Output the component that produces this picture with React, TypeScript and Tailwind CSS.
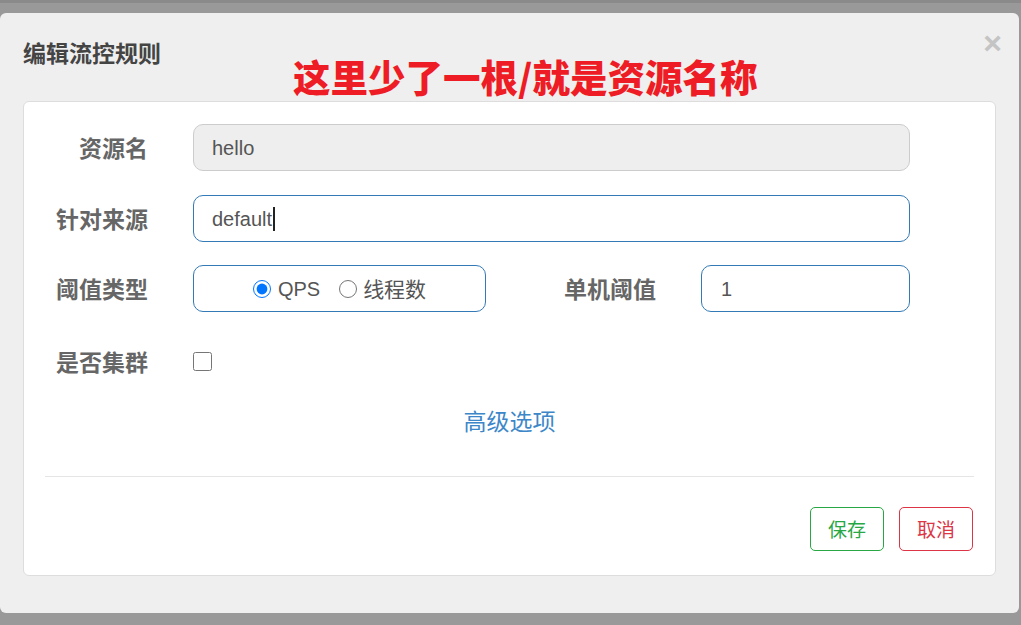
import React from 'react';

const cjk = { fontFamily: '"Noto Sans CJK SC", "Microsoft YaHei", sans-serif' };
const latin = { fontFamily: '"Liberation Sans", Arial, "Noto Sans CJK SC", sans-serif' };

const Label: React.FC<{ text: string; width: string }> = ({ text, width }) => (
  <div className={`${width} shrink-0 text-right text-[23px] font-bold text-[#666] leading-none`} style={cjk}>
    {text}
  </div>
);

export default function App() {
  return (
    <div className="h-[625px] w-full overflow-hidden bg-[#999] border-t-[3px] border-[#8a8a8a] pt-[10px] pr-[2px]">
      <div className="relative h-[600px] w-[1019px] rounded-md bg-[#efefef]">
        <button className="absolute right-[17px] top-[14px] text-[32px] font-bold leading-none text-[#c4c4c4]" style={latin}>
          ×
        </button>

        {/* annotation overlay */}
        <div
          className="absolute left-[293px] top-[44px] text-[37.5px] font-black leading-none text-[#ee1c25] whitespace-nowrap"
          style={cjk}
        >
          这里少了一根/就是资源名称
        </div>

        <div className="pl-[23px] pt-[24px]">
          <h4 className="h-[30px] text-[23px] font-bold leading-[30px] text-[#444]" style={cjk}>
            编辑流控规则
          </h4>
        </div>

        <div className="mx-[23px] mt-[34px] h-[475px] rounded-md border border-[#ddd] bg-white pt-[22px]">
          {/* resource name */}
          <div className="flex h-[47px] items-center">
            <Label text="资源名" width="w-[124px]" />
            <div
              className="ml-[45px] flex h-[47px] w-[717px] items-center rounded-[10px] border border-[#ccc] bg-[#eee] px-[18px] text-[20px] text-[#555]"
              style={latin}
            >
              hello
            </div>
          </div>

          {/* limit app */}
          <div className="mt-[24px] flex h-[47px] items-center">
            <Label text="针对来源" width="w-[124px]" />
            <div
              className="ml-[45px] flex h-[47px] w-[717px] items-center rounded-[10px] border border-[#337ab7] bg-white px-[18px] text-[20px] text-[#555]"
              style={latin}
            >
              default
              <span className="ml-[1px] inline-block h-[24px] w-[2px] bg-[#222]" />
            </div>
          </div>

          {/* threshold type */}
          <div className="mt-[23px] flex h-[47px] items-center">
            <Label text="阈值类型" width="w-[124px]" />
            <div className="ml-[45px] flex h-[47px] w-[293px] items-center justify-center rounded-[10px] border border-[#337ab7] bg-white text-[20px] text-[#555]">
              <label className="flex items-center">
                <input type="radio" name="grade" defaultChecked className="m-0 h-[18px] w-[18px]" />
                <span className="ml-[7px]" style={latin}>QPS</span>
              </label>
              <label className="ml-[19px] flex items-center">
                <input type="radio" name="grade" className="m-0 h-[18px] w-[18px]" />
                <span className="ml-[6px] text-[21px]" style={cjk}>线程数</span>
              </label>
            </div>
            <Label text="单机阈值" width="w-[170px]" />
            <div
              className="ml-[45px] flex h-[47px] w-[209px] items-center rounded-[10px] border border-[#337ab7] bg-white px-[19px] text-[20px] text-[#555]"
              style={latin}
            >
              1
            </div>
          </div>

          {/* cluster */}
          <div className="mt-[26px] flex h-[47px] items-center">
            <Label text="是否集群" width="w-[124px]" />
            <input type="checkbox" className="m-0 ml-[45px] h-[19px] w-[19px]" />
          </div>

          <div className="mt-[19px] h-[32px] text-center text-[23px] leading-[32px] text-[#3d87c9]" style={cjk}>
            高级选项
          </div>

          <div className="mx-[21px] mt-[40px] h-px bg-[#e5e5e5]" />

          <div className="mr-[22px] mt-[30px] flex justify-end gap-[15px]">
            <button
              className="h-[44px] w-[74px] rounded-[5px] border border-[#28a745] bg-white text-[19px] text-[#28a745]"
              style={cjk}
            >
              保存
            </button>
            <button
              className="h-[44px] w-[74px] rounded-[5px] border border-[#dc3545] bg-white text-[19px] text-[#dc3545]"
              style={cjk}
            >
              取消
            </button>
          </div>
        </div>
      </div>
    </div>
  );
}
